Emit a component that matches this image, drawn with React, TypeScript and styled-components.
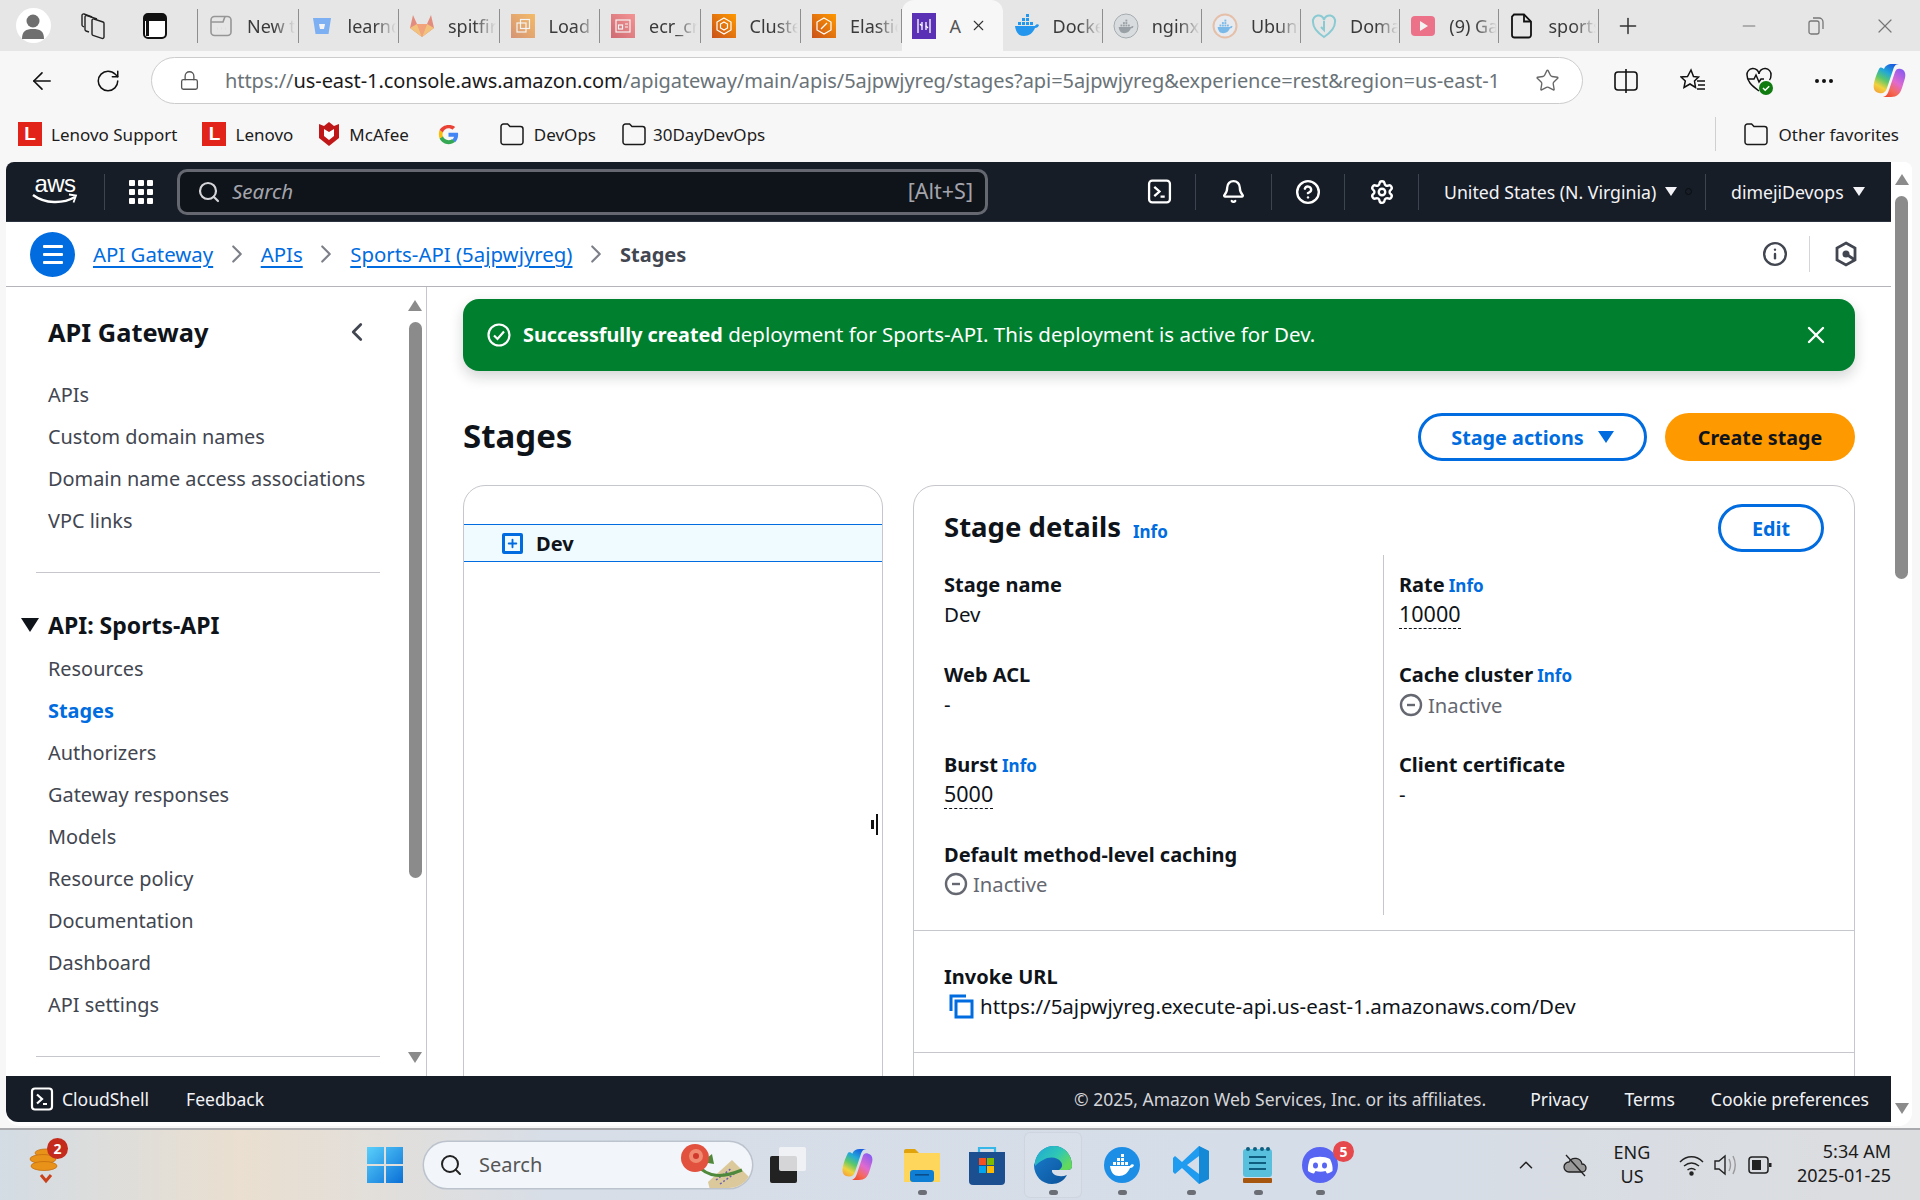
import React from 'react';
import styled, { createGlobalStyle } from 'styled-components';
import { ArrowLeft, RotateCw, Lock, Star, Bell, CircleHelp, Settings, Search, X, Plus, Minus, ChevronLeft, ChevronRight, ChevronUp, MoreHorizontal, Info as InfoIcon } from 'lucide-react';

const Global = createGlobalStyle`
  html, body { margin: 0; padding: 0; width: 1920px; height: 1200px; overflow: hidden; background: #f7f7f7; }
  * { box-sizing: border-box; }
  body { font-family: "Noto Sans", "Open Sans", sans-serif; color: #0f141a; }
`;

const Page = styled.div`width:1920px;height:1200px;display:flex;flex-direction:column;overflow:hidden;`;

/* ---------- Browser chrome ---------- */
const TabStrip = styled.div`height:51px;background:#e6e6e6;display:flex;align-items:center;flex:none;color:#333;`;
const ChromeSlot = styled.div<{ $w: number }>`width:${p => p.$w}px;flex:none;display:flex;align-items:center;justify-content:center;height:51px;`;
const Avatar = styled.div`width:35px;height:35px;border-radius:50%;background:#fff;display:flex;align-items:center;justify-content:center;`;
const Tab = styled.div<{ $w: number; $clear?: boolean }>`width:${p => p.$w}px;height:34px;flex:none;display:flex;align-items:center;border-left:1px solid ${p => p.$clear ? 'transparent' : '#8e8e8e'};padding-left:10px;overflow:hidden;`;
const TabEnd = styled.div`width:1px;height:34px;background:#8e8e8e;flex:none;`;
const TabIcon = styled.div<{ $solid?: boolean }>`width:26px;height:26px;flex:none;opacity:${p => p.$solid ? 1 : .55};display:flex;align-items:center;justify-content:center;`;
const TabText = styled.div`margin-left:13px;font-size:18px;white-space:nowrap;width:48px;overflow:hidden;color:#3a3a3a;-webkit-mask-image:linear-gradient(90deg,#000 55%,transparent 100%);mask-image:linear-gradient(90deg,#000 55%,transparent 100%);`;
const ActiveTab = styled.div`width:101px;height:51px;flex:none;background:#f7f7f7;border-radius:12px 12px 0 0;display:flex;align-items:center;padding-left:10px;`;
const ActiveLabel = styled.div`margin-left:14px;font-size:18px;color:#555;width:16px;`;
const ActiveClose = styled.span`margin-left:4px;display:flex;`;
const WindowButtons = styled.div`display:flex;align-items:center;margin-left:auto;padding-right:23px;gap:49px;color:#777;`;
const AddressRow = styled.div`height:59px;background:#f7f7f7;display:flex;align-items:center;flex:none;`;
const AddressBar = styled.div`width:1432px;height:47px;background:#fff;border:1.5px solid #ccc;border-radius:24px;display:flex;align-items:center;padding:0 22px 0 27px;flex:none;`;
const Url = styled.div`margin-left:25px;font-size:20px;color:#6a7378;white-space:nowrap;flex:1;letter-spacing:-.06px;overflow:hidden;`;
const UrlHost = styled.span`color:#1a1a1a;`;
const StarSlot = styled.span`margin-left:14px;display:flex;`;
const BookmarkRow = styled.div`height:52px;background:#f7f7f7;display:flex;align-items:center;padding-left:18px;flex:none;gap:25px;padding-bottom:4px;`;
const Bookmark = styled.div<{ $gap?: number; $mr?: number; $ml?: number }>`display:flex;align-items:center;gap:${p => p.$gap ?? 9}px;font-size:17px;color:#1c1c1c;white-space:nowrap;margin:0 ${p => p.$mr ?? 0}px 0 ${p => p.$ml ?? 0}px;`;
const LenovoMark = styled.div`width:24px;height:24px;background:#e2231a;color:#fff;font:700 19px "Liberation Sans",sans-serif;display:flex;align-items:center;justify-content:center;`;
const BookmarkDivider = styled.div`width:1px;height:34px;background:#d0d0d0;margin-left:auto;`;

/* ---------- Console ---------- */
const Viewport = styled.div`width:1906px;height:964px;margin-left:6px;background:#fff;display:flex;border-radius:8px 8px 14px 14px;overflow:hidden;flex:none;`;
const AppColumn = styled.div`width:1885px;flex:none;display:flex;flex-direction:column;`;
const TopNav = styled.header`height:60px;background:#161d26;display:flex;align-items:center;color:#fff;flex:none;border-bottom:1px solid #2b3440;`;
const Logo = styled.div`width:98px;flex:none;display:flex;flex-direction:column;align-items:center;line-height:1;`;
const LogoText = styled.span`font:400 24px/18px "Liberation Sans",sans-serif;letter-spacing:-.5px;margin-top:-2px;`;
const NavDivider = styled.div<{ $light?: boolean; $m?: string }>`width:1px;height:36px;background:${p => p.$light ? '#d5d5d9' : '#3c4450'};flex:none;margin:${p => p.$m ?? '0'};`;
const Waffle = styled.div`width:72px;flex:none;display:flex;justify-content:center;`;
const SearchBox = styled.div`width:811px;height:46px;flex:none;background:#0f141a;border:3px solid #656871;border-radius:10px;display:flex;align-items:center;padding:0 12px 0 17px;color:#c6c6cd;`;
const SearchHint = styled.span`font-style:italic;font-size:20.5px;margin-left:11px;color:#a4a4ad;flex:1;margin-top:-2px;`;
const SearchKey = styled.span`font-size:21.5px;color:#a4a4ad;margin-top:-2px;`;
const NavIcon = styled.div<{ $w: number; $end?: number }>`width:${p => p.$w}px;flex:none;display:flex;justify-content:${p => p.$end ? 'flex-end' : 'center'};padding-right:${p => p.$end ?? 0}px;align-items:center;`;
const NavMenu = styled.div<{ $w: number }>`width:${p => p.$w}px;flex:none;display:flex;align-items:center;font-size:17.7px;padding-left:25px;white-space:nowrap;color:#f3f3f7;`;
const Caret = styled.span<{ $big?: boolean }>`width:0;height:0;border-left:${p => p.$big ? 8 : 6}px solid transparent;border-right:${p => p.$big ? 8 : 6}px solid transparent;border-top:${p => p.$big ? 12 : 9}px solid currentColor;margin-left:${p => p.$big ? 14 : 9}px;flex:none;`;
const TinyDot = styled.span`width:7px;height:7px;border-radius:50%;border:1px solid #0a0d11;margin-left:8px;flex:none;`;

const Crumbs = styled.div`height:65px;flex:none;display:flex;align-items:center;border-bottom:1px solid #b4b4bb;padding:0 0 0 24px;`;
const MenuRound = styled.div`width:45px;height:45px;border-radius:50%;background:#006ce0;display:flex;flex-direction:column;gap:5px;align-items:center;justify-content:center;flex:none;margin-right:18px;`;
const MenuBar = styled.span`width:20px;height:3px;background:#fff;border-radius:1px;`;
const CrumbLink = styled.a`color:#006ce0;font-size:20.4px;text-decoration:underline;text-underline-offset:4px;text-decoration-thickness:2px;white-space:nowrap;`;
const CrumbSep = styled.div`width:47.5px;flex:none;color:#7d8089;display:flex;justify-content:center;`;
const CrumbNow = styled.span`font-size:20px;font-weight:700;color:#424650;`;
const CrumbTools = styled.div`margin-left:auto;display:flex;align-items:center;color:#424650;padding-right:33px;`;

const Body = styled.div`flex:1;min-height:0;display:flex;overflow:hidden;`;
const SideNav = styled.nav`width:421px;flex:none;border-right:1px solid #c6c6cd;display:flex;`;
const SideInner = styled.div`width:398px;flex:none;padding-left:30px;`;
const SideTitleRow = styled.div`height:40px;margin-top:25px;margin-bottom:22px;display:flex;align-items:center;justify-content:space-between;padding:0 32px 0 12px;`;
const SideTitle = styled.div`font-size:25.4px;font-weight:700;`;
const SideItem = styled.div<{ $active?: boolean }>`height:42px;line-height:42px;padding-left:12px;font-size:19.9px;white-space:nowrap;color:${p => p.$active ? '#006ce0' : '#424650'};font-weight:${p => p.$active ? 700 : 400};`;
const SideRule = styled.div`height:1px;background:#c6c6cd;width:344px;margin-top:30px;`;
const SideSection = styled.div`height:40px;margin:32px 0 3px -15px;display:flex;align-items:center;gap:9px;font-size:23px;font-weight:700;`;
const Triangle = styled.span`width:0;height:0;border-left:9px solid transparent;border-right:9px solid transparent;border-top:14px solid #0f141a;`;
const Track = styled.div<{ $w: number; $top: number }>`width:${p => p.$w}px;flex:none;display:flex;flex-direction:column;align-items:center;padding-top:${p => p.$top}px;background:#fff;`;
const ArrowUp = styled.span`width:0;height:0;border-left:7px solid transparent;border-right:7px solid transparent;border-bottom:11px solid #8b8b8b;flex:none;`;
const ArrowDown = styled.span`width:0;height:0;border-left:7px solid transparent;border-right:7px solid transparent;border-top:11px solid #8b8b8b;flex:none;`;
const Thumb = styled.div<{ $h: number; $gap: number; $after: number }>`width:13px;height:${p => p.$h}px;background:#8b8b8b;border-radius:7px;flex:none;margin:${p => p.$gap}px 0 ${p => p.$after}px;`;

const Content = styled.main`flex:1;min-width:0;padding:12px 36px 0 36px;`;
const Banner = styled.div`height:72px;background:#00802f;border-radius:16px;color:#fff;display:flex;align-items:center;padding:0 25px 0 24px;box-shadow:0 6px 14px rgba(15,20,26,.18);font-size:20.5px;`;
const BannerText = styled.div`margin-left:12px;flex:1;white-space:nowrap;margin-top:-2px;`;
const BannerStrong = styled.b`font-size:19.8px;`;
const PageHead = styled.div`height:48px;margin-top:42px;display:flex;align-items:center;`;
const PageTitle = styled.h1`font-size:33px;font-weight:700;margin:-2px 0 0;flex:1;line-height:48px;`;
const OutlineBtn = styled.button<{ $w: number }>`width:${p => p.$w}px;height:48px;border:3px solid #006ce0;border-radius:24px;background:#fff;color:#006ce0;font:700 19.8px "Noto Sans",sans-serif;display:flex;align-items:center;justify-content:center;padding:0;flex:none;`;
const PrimaryBtn = styled.button`height:48px;width:190px;margin-left:18px;border:none;border-radius:24px;background:#ff9900;color:#0f141a;font:700 19.7px "Noto Sans",sans-serif;flex:none;`;
const Panels = styled.div`display:flex;gap:30px;margin-top:24px;align-items:flex-start;`;
const StagesPanel = styled.section`width:420px;height:620px;flex:none;border:1px solid #c6c6cd;border-radius:22px;padding-top:38px;position:relative;`;
const StageRow = styled.div`height:38px;background:#f0fbff;border-top:1.5px solid #006ce0;border-bottom:1.5px solid #006ce0;display:flex;align-items:center;padding-left:38px;gap:13px;font-size:20px;font-weight:700;`;
const PlusBox = styled.span`width:21px;height:21px;border:3px solid #006ce0;border-radius:2px;flex:none;color:#006ce0;display:flex;align-items:center;justify-content:center;`;
const ResizeCursor = styled.div`position:absolute;left:407px;top:327px;width:7px;height:22px;display:flex;align-items:center;gap:2px;`;
const CursorBar = styled.span<{ $h: number }>`width:2.5px;height:${p => p.$h}px;background:#111;flex:none;`;
const DetailCard = styled.section`width:942px;height:800px;flex:none;border:1px solid #c6c6cd;border-radius:22px 22px 0 0;`;
const CardHead = styled.div`height:69px;padding:18px 30px 0 30px;display:flex;align-items:flex-start;`;
const CardTitle = styled.h2`font-size:27.5px;font-weight:700;margin:0;line-height:46px;`;
const InfoLink = styled.a`color:#006ce0;font-size:17px;font-weight:700;margin-left:4px;`;
const CardTitleInfo = styled.div`line-height:52px;margin-right:auto;margin-left:8px;padding-top:2px;`;
const Columns = styled.div`display:flex;height:360px;`;
const Col = styled.div<{ $left?: boolean }>`width:470px;padding:15px 0 0 ${p => p.$left ? 30 : 15}px;${p => p.$left ? 'border-right:1px solid #c6c6cd;' : ''}`;
const Field = styled.div`height:90px;`;
const FieldLabel = styled.div`font-size:20px;font-weight:700;line-height:30px;white-space:nowrap;`;
const FieldValue = styled.div`font-size:20.5px;line-height:30px;color:#0f141a;white-space:nowrap;display:flex;align-items:center;margin-top:-1px;`;
const Dotted = styled.span`font-size:21.5px;border-bottom:1.5px dashed #0f141a;line-height:26px;height:28px;display:inline-block;margin-top:1px;`;
const Status = styled.div`display:flex;align-items:center;gap:5px;font-size:20.2px;line-height:30px;color:#656871;margin-top:-1px;`;
const HR = styled.div<{ $flush?: boolean }>`height:1px;background:#c6c6cd;margin-top:${p => p.$flush ? 0 : 15}px;`;
const InvokeBlock = styled.div`height:121px;padding:31px 0 0 30px;`;
const CopyBox = styled.span`margin:0 6px 0 5px;display:inline-flex;flex:none;`;

const Footer = styled.footer`height:46px;background:#161d26;flex:none;display:flex;align-items:center;color:#f3f3f7;font-size:17.5px;padding:0 22px 0 24px;white-space:nowrap;margin-bottom:4px;border-radius:0 0 0 12px;`;
const FootLink = styled.span<{ $ml?: number }>`margin-left:${p => p.$ml ?? 0}px;display:flex;align-items:center;gap:8px;`;
const Copyright = styled.span`margin-left:auto;color:#d5d5d9;`;

/* ---------- Taskbar ---------- */
const Taskbar = styled.div`flex:none;height:72px;margin-top:2px;border-top:2px solid #a9aaad;background:linear-gradient(90deg,#d3dce4 0,#eadfd0 240px,#d7dee8 560px,#d5dde8 1300px,#dcdddf 1920px);display:flex;align-items:center;color:#1b1b1b;`;
const CoinSlot = styled.div`width:367px;flex:none;padding-left:29px;position:relative;height:70px;display:flex;align-items:center;`;
const Dot = styled.span`position:absolute;bottom:3px;left:50%;margin-left:-4px;width:9px;height:5px;border-radius:3px;background:#6b6f75;`;
const TaskIcon = styled.div<{ $w: number; $ml?: number; $hl?: boolean }>`width:${p => p.$w}px;margin-left:${p => p.$ml ?? 0}px;height:66px;flex:none;display:flex;align-items:center;justify-content:center;position:relative;${p => p.$hl ? 'background:rgba(255,255,255,.08);border-radius:6px;box-shadow:inset 0 0 0 1px rgba(170,175,185,.2);' : ''}`;
const TaskSearch = styled.div`width:328px;height:46px;margin-left:21px;margin-top:-1px;border-radius:23px;background:#f2f5f9;box-shadow:0 0 0 1.5px #bcc3cd;display:flex;align-items:center;padding-left:15px;flex:none;font-size:20px;color:#555;overflow:hidden;gap:16px;`;
const RoseSlot = styled.div`margin-left:auto;flex:none;display:flex;`;
const NumBadge = styled.span<{ $bg: string }>`position:absolute;width:21px;height:21px;border-radius:50%;background:${p => p.$bg};color:#fff;font-size:14px;font-weight:700;display:flex;align-items:center;justify-content:center;`;
const CoinBadge = styled(NumBadge)`left:47px;top:8px;`;
const DiscordBadge = styled(NumBadge)`left:31px;top:9px;`;
const Tray = styled.div`margin-left:auto;display:flex;align-items:center;padding-right:29px;height:70px;`;
const TrayItem = styled.div<{ $w: number; $ml?: number }>`width:${p => p.$w}px;margin-left:${p => p.$ml ?? 0}px;flex:none;display:flex;align-items:center;justify-content:center;`;
const LangBox = styled.div`width:74px;text-align:center;font-size:18px;line-height:24px;flex:none;margin-top:-2px;`;
const Clock = styled.div`text-align:right;font-size:18px;line-height:24px;width:115px;flex:none;margin-top:-4px;`;

/* ---------- Drawings ---------- */
const Folder = () => (
  <svg width="26" height="26" viewBox="0 0 26 26" fill="none" stroke="#1a1a1a" strokeWidth="1.5"><path d="M2 7V21a2.500 2.500 0 0 0 2.500 2.500h17A2.500 2.500 0 0 0 24 21V8a2.500 2.500 0 0 0-2.500-2.500H11L8.600 3H4.500A2.500 2.500 0 0 0 2 5.500V7" /></svg>
);
const AwsFav = ({ c1, c2, children }: { c1: string; c2: string; children?: React.ReactNode }) => (
  <svg width="24" height="24" viewBox="0 0 24 24"><defs><linearGradient id={c1 + c2} x1="0" y1="1" x2="1" y2="0"><stop offset="0" stopColor={c1} /><stop offset="1" stopColor={c2} /></linearGradient></defs><rect width="24" height="24" fill={`url(#${c1 + c2})`} /><g fill="none" stroke="#fff" strokeWidth="1.2">{children}</g></svg>
);
const Whale = ({ c = '#2496ed', size = 26 }: { c?: string; size?: number }) => (
  <svg width={size} height={size} viewBox="0 0 26 26" fill={c}><path d="M1 13h20c1-2 3-2 4-1-.5 2-2 3-4 3-2 5-6 8-11 8-5 0-8-3-9-10z" /><g><rect x="4" y="9" width="3" height="3" /><rect x="8" y="9" width="3" height="3" /><rect x="12" y="9" width="3" height="3" /><rect x="8" y="5" width="3" height="3" /><rect x="12" y="5" width="3" height="3" /><rect x="12" y="1" width="3" height="3" /><rect x="16" y="9" width="3" height="3" /></g></svg>
);
const CloudShellIcon = ({ s = 24 }: { s?: number }) => (
  <svg width={s} height={s} viewBox="0 0 24 24" fill="none" stroke="#fff" strokeWidth="2.2"><rect x="2" y="1.500" width="20" height="21" rx="3" /><path d="M7 7.500l5 4.500-5 4.500M13 17h4" /></svg>
);
const MinusCircle = () => (
  <svg width="24" height="24" viewBox="0 0 24 24" fill="none" stroke="#656871" strokeWidth="2.4"><circle cx="12" cy="12" r="10" /><path d="M8 12h8" /></svg>
);
const Check = ({ s = 24 }: { s?: number }) => (
  <svg width={s} height={s} viewBox="0 0 24 24" fill="none" stroke="#fff" strokeWidth="2.2"><circle cx="12" cy="12" r="10.500" /><path d="M7 12.500l3.500 3.500L17 8.500" /></svg>
);
const Copilot = ({ s = 36, id }: { s?: number; id: string }) => (
  <svg width={s} height={s} viewBox="0 0 36 36">
    <defs>
      <linearGradient id={id + 'a'} x1=".7" y1="0" x2=".2" y2="1"><stop offset="0" stopColor="#1a5fe0" /><stop offset=".3" stopColor="#22a8d8" /><stop offset=".55" stopColor="#5cc86a" /><stop offset=".8" stopColor="#f2d23c" /><stop offset="1" stopColor="#f4a63a" /></linearGradient>
      <linearGradient id={id + 'b'} x1=".8" y1="0" x2=".2" y2="1"><stop offset="0" stopColor="#8a5cf0" /><stop offset=".45" stopColor="#e06ad0" /><stop offset=".75" stopColor="#f46a5a" /><stop offset="1" stopColor="#ef4a30" /></linearGradient>
    </defs>
    <path d="M24 9c1-3 3-4 6-3 4 1 5 5 4 9-1 3-2 7-3 10-2 6-5 9-11 9h-8c4-1 5-4 6-7z" fill={`url(#${id}b)`} />
    <path d="M13 6c1-3 4-5 8-5h7c-4 0-5 3-6 6l-6 18c-1 4-4 6-8 5-5-1-6-5-5-10 1-5 3-10 5-14 1-2 3-2 5 0z" fill={`url(#${id}a)`} />
  </svg>
);

const tabsLeft = [
  { t: 'New tab', i: <svg width="24" height="24" viewBox="0 0 24 24" fill="none" stroke="#555" strokeWidth="1.6"><rect x="2" y="2.500" width="20" height="19" rx="3.500" /><path d="M2 8h12l2-5.500" /><path d="M8 14.500h.1M12 14.500h.1M16 14.500h.1" strokeWidth="2" /></svg> },
  { t: 'learndevops', i: <svg width="20" height="20" viewBox="0 0 20 20"><path d="M1 2h18l-2.500 16h-13z" fill="#2684ff" /><path d="M7 8h6l-1 5H8z" fill="#fff" /></svg> },
  { t: 'spitfire', i: <svg width="26" height="26" viewBox="0 0 26 26"><path d="M13 24L1 15 4 2l4 9h10l4-9 3 13z" fill="#e24329" /><path d="M13 24L8 11h10z" fill="#fc6d26" /><path d="M1 15l12 9-5-13z" fill="#fca326" /><path d="M25 15l-12 9 5-13z" fill="#fca326" /></svg> },
  { t: 'Load balancer', i: <AwsFav c1="#c8511b" c2="#ff9900"><rect x="6" y="9" width="9" height="9" /><rect x="9.500" y="5.500" width="9" height="9" /></AwsFav> },
  { t: 'ecr_create', i: <AwsFav c1="#bd0816" c2="#ff5252"><rect x="5" y="6" width="14" height="12" /><rect x="7.500" y="11" width="4" height="4" /><path d="M14 10h3M14 13h3" /></AwsFav> },
  { t: 'Clusters', i: <AwsFav c1="#c8511b" c2="#ff9900"><path d="M12 4l7 4v8l-7 4-7-4V8z" /><path d="M12 8l3.500 2v4L12 16l-3.500-2v-4z" /></AwsFav>, solid: true },
  { t: 'Elastic', i: <AwsFav c1="#c8511b" c2="#ff9900"><path d="M12 4l7 4v8l-7 4-7-4V8z" /><path d="M9 15l6-6" /></AwsFav>, solid: true },
];
const tabsRight = [
  { t: 'Docker Hub', i: <Whale />, solid: true },
  { t: 'nginx', i: <svg width="26" height="26" viewBox="0 0 26 26"><circle cx="13" cy="13" r="12" fill="#cfd5da" stroke="#6e7a82" /><g transform="translate(5 6) scale(.62)"><Whale c="#5b6a73" /></g></svg> },
  { t: 'Ubuntu', i: <svg width="26" height="26" viewBox="0 0 26 26"><circle cx="13" cy="13" r="11.500" fill="#e8eef5" stroke="#e6a078" strokeWidth="2" /><g transform="translate(5 6) scale(.62)"><Whale /></g></svg> },
  { t: 'Domains', i: <svg width="26" height="26" viewBox="0 0 26 26" fill="none" stroke="#3fb4c4" strokeWidth="2"><path d="M13 24C4 18 2 13 2 9a5.500 5.500 0 0 1 11-2 5.500 5.500 0 0 1 11 2c0 4-2 9-11 15z" /><path d="M13 8v9l-3-3" /></svg> },
  { t: '(9) Gaming', i: <svg width="24" height="20" viewBox="0 0 24 20"><rect width="24" height="20" rx="4" fill="#f0143c" /><path d="M9 5l8 5-8 5z" fill="#fff" /></svg> },
  { t: 'sports', i: <svg width="24" height="26" viewBox="0 0 24 26" fill="none" stroke="#111" strokeWidth="1.8"><path d="M4 1.500h10l7 7V22a2.500 2.500 0 0 1-2.500 2.500h-14A2.500 2.500 0 0 1 2 22V3.500z" /><path d="M14 1.500V8.500h7" /></svg>, solid: true },
];

const left = [
  ['Stage name', null, 'Dev'],
  ['Web ACL', null, '-'],
  ['Burst', 'Info', 'dot:5000'],
  ['Default method-level caching', null, 'status'],
];
const right = [
  ['Rate', 'Info', 'dot:10000'],
  ['Cache cluster', 'Info', 'status'],
  ['Client certificate', null, '-'],
];

const FieldBlock = ({ f }: { f: (string | null)[] }) => (
  <Field>
    <FieldLabel>{f[0]}{f[1] && <InfoLink>{f[1]}</InfoLink>}</FieldLabel>
    {f[2] === 'status'
      ? <Status><MinusCircle />Inactive</Status>
      : f[2]!.startsWith('dot:')
        ? <FieldValue><Dotted>{f[2]!.slice(4)}</Dotted></FieldValue>
        : <FieldValue>{f[2]}</FieldValue>}
  </Field>
);

export default function App() {
  return (
    <Page>
      <Global />
      <TabStrip>
        <ChromeSlot $w={66}>
          <Avatar>
            <svg width="24" height="28" viewBox="0 0 24 28" fill="#6f6f6f"><circle cx="12" cy="9" r="6.500" /><path d="M1 27c0-8 4-10 11-10s11 2 11 10z" /></svg>
          </Avatar>
        </ChromeSlot>
        <ChromeSlot $w={54}>
          <svg width="26" height="28" viewBox="0 0 26 28" fill="none" stroke="#222" strokeWidth="1.400"><path d="M14 7l9 3a1.500 1.500 0 0 1 1 1.500V25a1.500 1.500 0 0 1-2 1.400l-9-3a1.500 1.500 0 0 1-1-1.400V8.500A1.500 1.500 0 0 1 14 7z" /><path d="M9 20L6 19a1.500 1.500 0 0 1-1-1.400V5a1.500 1.500 0 0 1 2-1.400l10 3.400" /><path d="M4 15L2.500 14A1.500 1.500 0 0 1 2 13V3.500A1.500 1.500 0 0 1 4 2l8 3" /></svg>
        </ChromeSlot>
        <ChromeSlot $w={70}>
          <svg width="24" height="26" viewBox="0 0 24 26"><rect x="1" y="1" width="22" height="24" rx="4" fill="#fff" stroke="#111" strokeWidth="2" /><path d="M1 5a4 4 0 0 1 4-4h14a4 4 0 0 1 4 4v3H1z" fill="#111" /><rect x="3" y="8" width="3" height="15" fill="#111" /></svg>
        </ChromeSlot>
        <ChromeSlot $w={7} />
        {tabsLeft.map(t => (
          <Tab key={t.t} $w={100.5}><TabIcon $solid={t.solid}>{t.i}</TabIcon><TabText>{t.t}</TabText></Tab>
        ))}
        <TabEnd />
        <ActiveTab>
          <svg width="24" height="26" viewBox="0 0 24 26"><rect width="24" height="26" fill="#5a30b5" /><g fill="none" stroke="#fff" strokeWidth="1.300"><path d="M6 6v14M18 6v14M10 9v8M14 9v8" /><path d="M10 13l-2-2M14 13l2 2" /></g></svg>
          <ActiveLabel>A</ActiveLabel>
          <ActiveClose><X size={17} strokeWidth={1.5} color="#333" /></ActiveClose>
        </ActiveTab>
        {tabsRight.map((t, i) => (
          <Tab key={t.t} $w={99.2} $clear={i === 0}><TabIcon $solid={t.solid}>{t.i}</TabIcon><TabText>{t.t}</TabText></Tab>
        ))}
        <TabEnd />
        <ChromeSlot $w={58}><Plus size={26} strokeWidth={1.4} color="#333" /></ChromeSlot>
        <WindowButtons>
          <Minus size={20} strokeWidth={1.3} />
          <svg width="16" height="18" viewBox="0 0 16 18" fill="none" stroke="#777" strokeWidth="1.300"><rect x="1" y="4" width="10" height="13" rx="2" /><path d="M5 1h6a4 4 0 0 1 4 4v7" /></svg>
          <X size={24} strokeWidth={1.2} />
        </WindowButtons>
      </TabStrip>

      <AddressRow>
        <ChromeSlot $w={84}><ArrowLeft size={28} strokeWidth={1.4} color="#111" /></ChromeSlot>
        <ChromeSlot $w={48}><RotateCw size={26} strokeWidth={1.4} color="#111" /></ChromeSlot>
        <ChromeSlot $w={19} />
        <AddressBar>
          <Lock size={21} strokeWidth={1.5} color="#555" />
          <Url>https://<UrlHost>us-east-1.console.aws.amazon.com</UrlHost>/apigateway/main/apis/5ajpwjyreg/stages?api=5ajpwjyreg&amp;experience=rest&amp;region=us-east-1</Url>
          <StarSlot><Star size={25} strokeWidth={1.3} color="#666" /></StarSlot>
        </AddressBar>
        <ChromeSlot $w={86}>
          <svg width="24" height="26" viewBox="0 0 24 26" fill="none" stroke="#111" strokeWidth="1.600"><rect x="1" y="4" width="22" height="18" rx="3" /><path d="M12 1v24" /></svg>
        </ChromeSlot>
        <ChromeSlot $w={47}>
          <svg width="26" height="26" viewBox="0 0 26 26" fill="none" stroke="#111" strokeWidth="1.500"><path d="M11 2l2.500 6.500 5 .5-4 4 1 6.500L10 16l-6 3.500 1.300-6.500L1 9l6.500-.5zM17 13h8M18 17h7M17 21h8" /></svg>
        </ChromeSlot>
        <ChromeSlot $w={88}>
          <svg width="30" height="32" viewBox="0 0 30 32" fill="none" stroke="#111" strokeWidth="1.500"><path d="M14 26C6 20 2 16 2 10a6 6 0 0 1 12-1 6 6 0 0 1 12 1c0 2-.5 4-1.500 5" /><path d="M3 14h6l2-4 3 7 2-3h3" /><circle cx="21" cy="23" r="7" fill="#107c10" stroke="none" /><path d="M18 23l2.200 2.200 4-4" stroke="#fff" strokeWidth="1.500" /></svg>
        </ChromeSlot>
        <ChromeSlot $w={40}><MoreHorizontal size={24} strokeWidth={2} color="#111" /></ChromeSlot>
        <ChromeSlot $w={89}><Copilot id="cpTop" /></ChromeSlot>
      </AddressRow>

      <BookmarkRow>
        <Bookmark><LenovoMark>L</LenovoMark>Lenovo Support</Bookmark>
        <Bookmark><LenovoMark>L</LenovoMark>Lenovo</Bookmark>
        <Bookmark>
          <svg width="22" height="26" viewBox="0 0 22 26"><path d="M1 3l5 2 5-4 5 4 5-2v14l-10 8L1 17z" fill="#c01818" /><path d="M6 8l5 3 5-3v7l-5 4-5-4z" fill="#fff" /></svg>
          McAfee
        </Bookmark>
        <Bookmark $ml={4} $mr={15}>
          <svg width="21" height="21" viewBox="0 0 48 48"><path fill="#4285F4" d="M46 24.500c0-1.700-.1-3-.4-4.500H24v9h12.500c-.5 3-2.200 5.500-4.700 7.200l7.200 5.600C43.300 37.800 46 31.800 46 24.500z" /><path fill="#34A853" d="M24 46c6 0 11-2 15-5.500l-7.200-5.600c-2 1.400-4.600 2.200-7.800 2.200-6 0-11-4-12.900-9.500L3.700 33.300C7.300 40.800 15 46 24 46z" /><path fill="#FBBC05" d="M11.100 28.600C10.600 27.200 10.300 25.600 10.300 24s.3-3.200.8-4.600L3.700 13.700A22 22 0 0 0 2 24c0 3.500.8 6.800 1.700 9.300z" /><path fill="#EA4335" d="M24 9.900c3.400 0 6.400 1.200 8.800 3.400l6.400-6.400C35.100 3.200 30 2 24 2 15 2 7.300 7.200 3.700 13.700l7.400 5.700C13 13.900 18 9.900 24 9.900z" /></svg>
        </Bookmark>
        <Bookmark><Folder />DevOps</Bookmark>
        <Bookmark $gap={6}><Folder />30DayDevOps</Bookmark>
        <BookmarkDivider />
        <Bookmark $mr={21} $ml={2}><Folder />Other favorites</Bookmark>
      </BookmarkRow>

      <Viewport>
        <AppColumn>
          <TopNav>
            <Logo>
              <LogoText>aws</LogoText>
              <svg width="46" height="13" viewBox="0 0 46 13" fill="none" stroke="#fff" strokeWidth="2.400"><path d="M1 2c12 9 30 9 42 2" /><path d="M37 1.500l7 1-2.500 7" strokeWidth="1.800" /></svg>
            </Logo>
            <NavDivider />
            <Waffle>
              <svg width="24" height="24" viewBox="0 0 24 24" fill="#fff">
                {[0, 9, 18].map(y => [0, 9, 18].map(x => <rect key={`${x}${y}`} x={x} y={y} width="6" height="6" rx="1" />))}
              </svg>
            </Waffle>
            <SearchBox>
              <Search size={24} strokeWidth={2.2} color="#d5d5d9" />
              <SearchHint>Search</SearchHint>
              <SearchKey>[Alt+S]</SearchKey>
            </SearchBox>
            <NavIcon $w={207} $end={23}><CloudShellIcon s={25} /></NavIcon>
            <NavDivider />
            <NavIcon $w={75}><Bell size={25} strokeWidth={2.2} /></NavIcon>
            <NavDivider />
            <NavIcon $w={72}><CircleHelp size={26} strokeWidth={2.2} /></NavIcon>
            <NavDivider />
            <NavIcon $w={73}><Settings size={26} strokeWidth={2.2} /></NavIcon>
            <NavDivider />
            <NavMenu $w={286}>United States (N. Virginia)<Caret /><TinyDot /></NavMenu>
            <NavDivider />
            <NavMenu $w={178}>dimejiDevops<Caret /></NavMenu>
          </TopNav>

          <Crumbs>
            <MenuRound><MenuBar /><MenuBar /><MenuBar /></MenuRound>
            <CrumbLink>API Gateway</CrumbLink>
            <CrumbSep><ChevronRight size={30} strokeWidth={1.7} /></CrumbSep>
            <CrumbLink>APIs</CrumbLink>
            <CrumbSep><ChevronRight size={30} strokeWidth={1.7} /></CrumbSep>
            <CrumbLink>Sports-API (5ajpwjyreg)</CrumbLink>
            <CrumbSep><ChevronRight size={30} strokeWidth={1.7} /></CrumbSep>
            <CrumbNow>Stages</CrumbNow>
            <CrumbTools>
              <InfoIcon size={26} strokeWidth={2.2} />
              <NavDivider $light $m="0 24px 0 21px" />
              <svg width="24" height="26" viewBox="0 0 24 26" fill="none" stroke="#424650" strokeWidth="2.800"><path d="M12 2l9 5v12l-9 5-9-5V7z" /><circle cx="12" cy="13" r="3.500" fill="#424650" stroke="none" /><path d="M12 13l9 6" /></svg>
            </CrumbTools>
          </Crumbs>

          <Body>
            <SideNav>
              <SideInner>
                <SideTitleRow>
                  <SideTitle>API Gateway</SideTitle>
                  <ChevronLeft size={30} strokeWidth={2.2} color="#424650" />
                </SideTitleRow>
                {['APIs', 'Custom domain names', 'Domain name access associations', 'VPC links'].map(s => <SideItem key={s}>{s}</SideItem>)}
                <SideRule />
                <SideSection><Triangle />API: Sports-API</SideSection>
                {['Resources', 'Stages', 'Authorizers', 'Gateway responses', 'Models', 'Resource policy', 'Documentation', 'Dashboard', 'API settings'].map(s => <SideItem key={s} $active={s === 'Stages'}>{s}</SideItem>)}
                <SideRule />
              </SideInner>
              <Track $w={22} $top={13}>
                <ArrowUp />
                <Thumb $h={556} $gap={11} $after={174} />
                <ArrowDown />
              </Track>
            </SideNav>
            <Content>
              <Banner>
                <Check />
                <BannerText><BannerStrong>Successfully created</BannerStrong> deployment for Sports-API. This deployment is active for Dev.</BannerText>
                <X size={28} strokeWidth={2} />
              </Banner>
              <PageHead>
                <PageTitle>Stages</PageTitle>
                <OutlineBtn $w={229}>Stage actions<Caret $big /></OutlineBtn>
                <PrimaryBtn>Create stage</PrimaryBtn>
              </PageHead>
              <Panels>
                <StagesPanel>
                  <StageRow>
                    <PlusBox><Plus size={13} strokeWidth={3.500} /></PlusBox>
                    Dev
                  </StageRow>
                  <ResizeCursor><CursorBar $h={9} /><CursorBar $h={21} /></ResizeCursor>
                </StagesPanel>
                <DetailCard>
                  <CardHead>
                    <CardTitle>Stage details</CardTitle>
                    <CardTitleInfo><InfoLink>Info</InfoLink></CardTitleInfo>
                    <OutlineBtn $w={106}>Edit</OutlineBtn>
                  </CardHead>
                  <Columns>
                    <Col $left>{left.map(f => <FieldBlock key={f[0]!} f={f} />)}</Col>
                    <Col>{right.map(f => <FieldBlock key={f[0]!} f={f} />)}</Col>
                  </Columns>
                  <HR />
                  <InvokeBlock>
                    <FieldLabel>Invoke URL</FieldLabel>
                    <FieldValue>
                      <CopyBox>
                        <svg width="25" height="25" viewBox="0 0 25 25" fill="none" stroke="#006ce0" strokeWidth="3"><path d="M2 17V2h15" /><rect x="7" y="7" width="16" height="16" /></svg>
                      </CopyBox>
                      https://5ajpwjyreg.execute-api.us-east-1.amazonaws.com/Dev
                    </FieldValue>
                  </InvokeBlock>
                  <HR $flush />
                </DetailCard>
              </Panels>
            </Content>
          </Body>

          <Footer>
            <FootLink><CloudShellIcon s={24} />CloudShell</FootLink>
            <FootLink $ml={37}>Feedback</FootLink>
            <Copyright>© 2025, Amazon Web Services, Inc. or its affiliates.</Copyright>
            <FootLink $ml={44}>Privacy</FootLink>
            <FootLink $ml={36}>Terms</FootLink>
            <FootLink $ml={36}>Cookie preferences</FootLink>
          </Footer>
        </AppColumn>
        <Track $w={21} $top={12}>
          <ArrowUp />
          <Thumb $h={383} $gap={11} $after={524} />
          <ArrowDown />
        </Track>
      </Viewport>

      <Taskbar>
        <CoinSlot>
          <svg width="30" height="38" viewBox="0 0 30 38"><g fill="#e8921a" stroke="#c56f10" strokeWidth=".8"><ellipse cx="17" cy="7" rx="11" ry="4" /><ellipse cx="14" cy="13" rx="13" ry="4.500" /><ellipse cx="15" cy="20" rx="13" ry="4.500" /></g><path d="M12 29l5 6 5-6" fill="none" stroke="#c9421b" strokeWidth="3" /></svg>
          <CoinBadge $bg="#c42b1c">2</CoinBadge>
        </CoinSlot>
        <svg width="36" height="36" viewBox="0 0 36 36"><defs><linearGradient id="win" x1="0" y1="0" x2="1" y2="1"><stop offset="0" stopColor="#5ad0fb" /><stop offset="1" stopColor="#0a6fd6" /></linearGradient></defs><path d="M0 0h17v17H0zM19 0h17v17H19zM0 19h17v17H0zM19 19h17v17H19z" fill="url(#win)" /></svg>
        <TaskSearch>
          <Search size={24} strokeWidth={2} color="#222" />
          Search
          <RoseSlot>
            <svg width="72" height="46" viewBox="0 0 72 46"><path d="M28 40l24-22 18 18-10 12H30z" fill="#dcc99b" /><path d="M36 38l16-12M40 42l18-13" stroke="#6b5fb0" strokeWidth="1.500" strokeDasharray="2 2" /><path d="M16 22c12 14 26 14 46 6" fill="none" stroke="#4f8a3c" strokeWidth="3" /><path d="M22 20l10-8 2 10z" fill="#4f8a3c" /><circle cx="15" cy="16" r="14" fill="#e2503e" /><circle cx="16" cy="14" r="7" fill="#f08a70" /><circle cx="16" cy="14" r="3" fill="#d0392b" /></svg>
          </RoseSlot>
        </TaskSearch>
        <TaskIcon $w={37} $ml={18}>
          <svg width="37" height="36" viewBox="0 0 37 36"><rect x="0" y="9" width="27" height="27" rx="2" fill="#222" /><rect x="9" y="0" width="27" height="24" rx="2" fill="#f5f5f7" opacity=".85" /></svg>
        </TaskIcon>
        <TaskIcon $w={36} $ml={32}><Copilot s={34} id="cpBar" /></TaskIcon>
        <TaskIcon $w={37} $ml={28}>
          <svg width="36" height="34" viewBox="0 0 36 34"><path d="M0 3a2 2 0 0 1 2-2h9l4 4h20v4H0z" fill="#e0a30c" /><path d="M0 5h36v29H0z" fill="#ffd65c" /><rect x="6" y="22" width="24" height="12" rx="3" fill="#0f7fd6" /><rect x="11" y="26" width="14" height="1.600" fill="#0a4d88" /></svg>
          <Dot />
        </TaskIcon>
        <TaskIcon $w={36} $ml={29}>
          <svg width="36" height="40" viewBox="0 0 36 40"><path d="M10 7V3h16v4" fill="none" stroke="#36b7e8" strokeWidth="2.200" /><path d="M0 7h36v29a4 4 0 0 1-4 4H4a4 4 0 0 1-4-4z" fill="#1c4f8f" /><rect x="10" y="13" width="7" height="7" fill="#f25022" /><rect x="18" y="13" width="7" height="7" fill="#7fba00" /><rect x="10" y="21" width="7" height="7" fill="#00a4ef" /><rect x="18" y="21" width="7" height="7" fill="#ffb900" /></svg>
        </TaskIcon>
        <TaskIcon $w={58} $ml={19} $hl>
          <svg width="38" height="38" viewBox="0 0 38 38"><defs><linearGradient id="edg" x1="0" y1="0" x2="1" y2=".6"><stop offset="0" stopColor="#1ea7d8" /><stop offset=".6" stopColor="#2fc7b5" /><stop offset="1" stopColor="#63d95c" /></linearGradient><linearGradient id="edb" x1="0" y1="0" x2="1" y2="1"><stop offset="0" stopColor="#1a80d0" /><stop offset="1" stopColor="#0b4f96" /></linearGradient></defs><path d="M1 16C3 6 11 0 20 0c10 0 18 8 18 20 0 3-2 4-5 4H18c-1 5 8 8 15 5-3 6-9 9-15 9-10 0-18-8-18-19z" fill="url(#edb)" /><path d="M1 16C3 6 11 0 20 0c10 0 18 8 18 20 0 3-2 4-5 4h-8c3-2 4-5 2-8-3-5-12-6-18-2-4 2-6 4-8 6z" fill="url(#edg)" /></svg>
          <Dot />
        </TaskIcon>
        <TaskIcon $w={36} $ml={22}>
          <svg width="36" height="36" viewBox="0 0 36 36"><circle cx="18" cy="18" r="18" fill="#1d8ee6" /><g transform="translate(5 6)"><Whale c="#fff" size={26} /></g></svg>
          <Dot />
        </TaskIcon>
        <TaskIcon $w={36} $ml={33}>
          <svg width="36" height="38" viewBox="0 0 36 38"><path d="M26 0l10 5v28l-10 5-17-16-7 6-2-2v-14l2-2 7 6z" fill="#1f9cf0" /><path d="M26 10L14 19l12 9z" fill="#d5dde8" /><path d="M26 0v38l10-5V5z" fill="#0f7dc4" opacity=".6" /></svg>
          <Dot />
        </TaskIcon>
        <TaskIcon $w={30} $ml={34}>
          <svg width="30" height="38" viewBox="0 0 30 38"><rect y="3" width="29" height="28" rx="3" fill="#58c0dc" /><g fill="#0f5e7f"><circle cx="5" cy="3" r="2" /><circle cx="12" cy="3" r="2" /><circle cx="19" cy="3" r="2" /><circle cx="25" cy="3" r="2" /><rect x="6" y="10" width="17" height="2" /><rect x="6" y="16" width="17" height="2" /><rect x="6" y="22" width="17" height="2" /></g><rect y="32" width="29" height="5" rx="1" fill="#a6560f" /></svg>
          <Dot />
        </TaskIcon>
        <TaskIcon $w={36} $ml={29}>
          <svg width="36" height="36" viewBox="0 0 36 36"><circle cx="18" cy="18" r="18" fill="#5865f2" /><path d="M8 12c6-3 14-3 20 0 2 4 3 8 2.500 12-2 1.500-4 2.200-5.500 2.500l-1.500-2.500c-3 1-7 1-10 0L12 26.500C10 26.200 8 25.500 6 24c-.5-4 .5-8 2-12z" fill="#fff" /><ellipse cx="13.500" cy="18.500" rx="2.500" ry="3" fill="#5865f2" /><ellipse cx="22.500" cy="18.500" rx="2.500" ry="3" fill="#5865f2" /></svg>
          <DiscordBadge $bg="#e5484d">5</DiscordBadge>
          <Dot />
        </TaskIcon>
        <Tray>
          <TrayItem $w={58}><ChevronUp size={22} strokeWidth={1.700} color="#222" /></TrayItem>
          <TrayItem $w={40}>
            <svg width="26" height="24" viewBox="0 0 26 24" fill="#999" stroke="#222" strokeWidth="1.300"><path d="M7 19a5 5 0 0 1 0-10 7 7 0 0 1 13 2 4 4 0 0 1 0 8z" /><path d="M4 2l19 21" fill="none" /></svg>
          </TrayItem>
          <LangBox>ENG<br />US</LangBox>
          <TrayItem $w={30} $ml={7}>
            <svg width="25" height="24" viewBox="0 0 25 24" fill="none" stroke="#222" strokeWidth="1.500"><path d="M1 9c7-7 16-7 23 0M5 13c5-4 10-4 15 0M8.500 17c2.500-2 5.500-2 8 0" /><circle cx="12.500" cy="20.500" r="1.500" fill="#222" /></svg>
          </TrayItem>
          <TrayItem $w={38}>
            <svg width="24" height="26" viewBox="0 0 24 26" fill="none" stroke="#222" strokeWidth="1.400"><path d="M2 9h4l6-5v18l-6-5H2z" /><path d="M16 7c2 4 2 8 0 12M20 4c3 6 3 12 0 18" stroke="#999" /></svg>
          </TrayItem>
          <TrayItem $w={32}>
            <svg width="24" height="20" viewBox="0 0 24 20" fill="none" stroke="#222" strokeWidth="1.500"><rect x="1" y="2" width="19" height="16" rx="3" /><rect x="4" y="5" width="9" height="10" fill="#222" stroke="none" /><rect x="21" y="8" width="2.500" height="4" fill="#222" stroke="none" /></svg>
          </TrayItem>
          <Clock>5:34 AM<br />2025-01-25</Clock>
        </Tray>
      </Taskbar>
    </Page>
  );
}
